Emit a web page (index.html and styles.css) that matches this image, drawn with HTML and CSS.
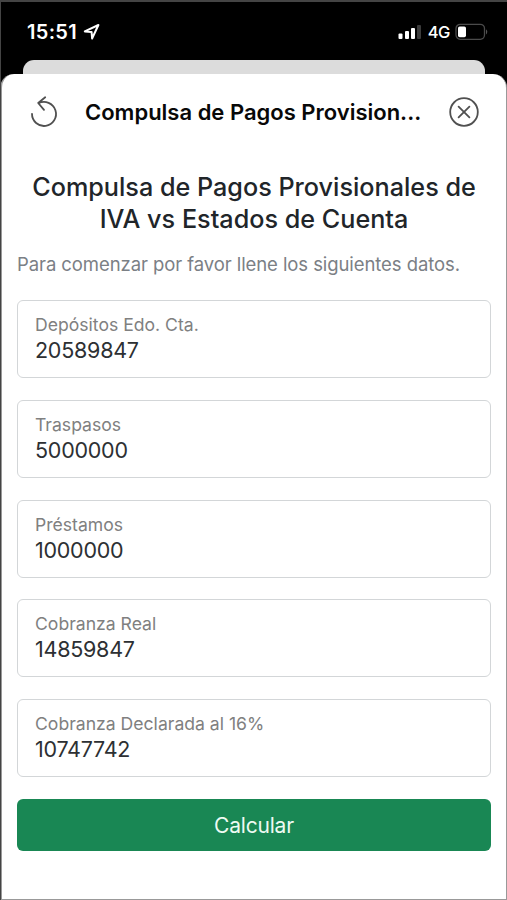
FILE: index.html
```html
<!DOCTYPE html>
<html lang="es">
<head>
<meta charset="utf-8">
<meta name="viewport" content="width=device-width, initial-scale=1">
<title>Compulsa de Pagos Provisionales</title>
<link rel="stylesheet" href="styles.css">
</head>
<body>
<div class="screen">
  <header class="status">
    <span class="time">15:51</span>
    <svg class="location" width="18" height="18" viewBox="0 0 18 18"><path d="M1.8 8.4 15.4 2 9.1 15.5 8.6 9.1Z" fill="none" stroke="#fff" stroke-width="2" stroke-linejoin="round"/></svg>
    <svg class="signal" width="24" height="16" viewBox="0 0 24 16"><g fill="#fff"><rect x="0.5" y="9.5" width="4" height="5.5" rx="1"/><rect x="7" y="7" width="4" height="8" rx="1"/><rect x="13" y="4" width="4" height="11" rx="1"/></g><rect x="19" y="1" width="4" height="14" rx="1" fill="#3b3b3b"/></svg>
    <span class="network">4G</span>
    <svg class="battery" width="34" height="18" viewBox="0 0 34 18"><rect x="1" y="1.3" width="28.5" height="15" rx="4.2" fill="none" stroke="#4b4b4b" stroke-width="1.3"/><rect x="3" y="3.6" width="8" height="10.6" rx="1.7" fill="#fff"/><path d="M31 6.2q2.6 2.6 0 5.2Z" fill="#555"/></svg>
  </header>
  <div class="backdrop"></div>
  <main class="sheet">
    <nav class="bar">
      <svg class="reset" width="30" height="34" viewBox="0 0 30 34"><path d="M3 18.8A12 12 0 1 0 9.5 8.3M16.2 2.2 9.2 8 15 14.8" fill="none" stroke="#505050" stroke-width="1.8" stroke-linecap="round" stroke-linejoin="round"/></svg>
      <span class="bar-title">Compulsa de Pagos Provision...</span>
      <svg class="close" width="30" height="30" viewBox="0 0 30 30"><g fill="none" stroke="#505050" stroke-width="1.8" stroke-linecap="round"><circle cx="15" cy="15" r="13.8"/><path d="M9.6 9.6 20.4 20.4M20.4 9.6 9.6 20.4"/></g></svg>
    </nav>
    <h1 class="heading">Compulsa de Pagos Provisionales de<br>IVA vs Estados de Cuenta</h1>
    <p class="intro">Para comenzar por favor llene los siguientes datos.</p>
    <form class="form">
      <div class="field"><span class="label">Depósitos Edo. Cta.</span><span class="value">20589847</span></div>
      <div class="field"><span class="label">Traspasos</span><span class="value">5000000</span></div>
      <div class="field"><span class="label">Préstamos</span><span class="value">1000000</span></div>
      <div class="field"><span class="label">Cobranza Real</span><span class="value">14859847</span></div>
      <div class="field"><span class="label">Cobranza Declarada al 16%</span><span class="value">10747742</span></div>
      <button class="submit" type="button">Calcular</button>
    </form>
  </main>
</div>
</body>
</html>
```
FILE: styles.css
```css
* { box-sizing: border-box; }
body { margin: 0; background: #000; font-family: Inter, "Liberation Sans", sans-serif; }
.screen { height: 900px; display: flex; flex-direction: column; overflow: hidden; border-top: 2px solid #444; border-left: 1px solid #444; }
.status { height: 58px; flex: none; display: flex; align-items: center; padding: 2px 18px 0 26px; color: #fff; }
.time { font-size: 20px; font-weight: 600; letter-spacing: 0.3px; }
.location { margin-left: 6px; }
.signal { margin-left: auto; }
.network { margin: 0 5px 0 6px; font-size: 16.5px; font-weight: 500; letter-spacing: -0.4px; }
.backdrop { height: 26px; flex: none; margin: 0 22px; border-radius: 11px 11px 0 0; background: #dcdcdc; }
.sheet { flex: 1; margin: -12px 0 0 -1px; background: #fff; border: solid #999; border-width: 0 1px 1px 2px; border-radius: 14px 14px 0 0; padding: 0 15px; }
.bar { height: 75px; display: flex; align-items: center; padding: 0 12px; }
.bar-title { flex: 1; margin-left: 26px; font-size: 22px; font-weight: 600; white-space: nowrap; color: #080808; }
.heading { margin: 22px 0 0; text-align: center; font-size: 25.2px; line-height: 32px; font-weight: 500; color: #212529; white-space: nowrap; }
.intro { margin: 15px 0 0; font-size: 18.5px; line-height: 28px; letter-spacing: -0.08px; color: #7b8085; white-space: nowrap; }
.form { margin-top: 22.4px; display: flex; flex-direction: column; gap: 21.7px; }
.field { height: 78px; border: 1px solid #d3d6d8; border-radius: 6px; padding: 11px 17px; display: flex; flex-direction: column; }
.label { font-size: 17.6px; line-height: 26px; color: #808080; }
.value { font-size: 21.5px; line-height: 25.4px; letter-spacing: -0.25px; color: #2d3033; }
.submit { height: 52px; border: 0; border-radius: 6px; background: #198754; color: #eefaf2; font: 400 21px/1 Inter, sans-serif; letter-spacing: -0.2px; padding-top: 2px; }
```
